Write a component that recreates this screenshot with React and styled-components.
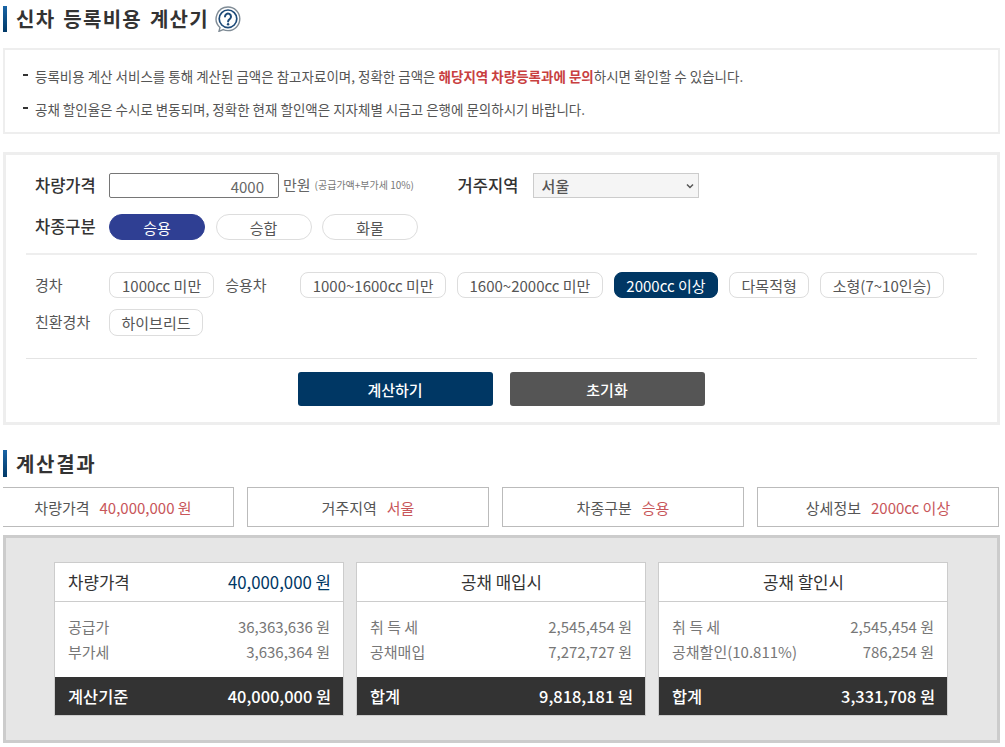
import React from "react";
import styled, { createGlobalStyle } from "styled-components";

const Global = createGlobalStyle`
  html, body { margin: 0; padding: 0; background: #fff; }
  body { font-family: "Noto Sans CJK KR", "Noto Sans", sans-serif; color: #333; }
  * { box-sizing: border-box; }
`;
const Page = styled.div`
  width: 1005px;
  height: 747px;
  padding: 0 5px 0 3px;
  overflow: hidden;
`;
const Heading = styled.h2`
  display: flex;
  align-items: center;
  height: ${(p) => p.$h}px;
  margin: ${(p) => p.$mt}px 0 0;
  padding-left: 9px;
  border-left: 4px solid #0b4f8a;
  border-image: linear-gradient(#1a66a8, #003764) 1;
  font-size: 20px;
  font-weight: 700;
  line-height: 1;
  color: #333;
  letter-spacing: ${(p) => p.$ls}px;
  word-spacing: 2px;
`;
const HelpIcon = styled.svg`
  width: 26px;
  height: 26px;
  margin-left: 6px;
  flex: none;
`;
const Notice = styled.div`
  height: 86px;
  margin-top: 16px;
  padding: 9px 0 0 18px;
  border: 2px solid #eee;
`;
const NoticeLine = styled.p`
  display: flex;
  align-items: center;
  height: 33px;
  margin: 0;
  font-size: 13.5px;
  color: #555;
  &::before {
    content: "";
    width: 5px;
    height: 2px;
    margin-right: 7px;
    background: #333;
    transform: translateY(-1px);
  }
`;
const Strong = styled.b`
  color: #c8403f;
  font-weight: 700;
  white-space: pre;
`;
const Pre = styled.span`
  white-space: pre;
`;
const FormBox = styled.div`
  height: 273px;
  margin-top: 18px;
  padding: 18px 20px 0 20px;
  border: 3px solid #eee;
`;
const Row = styled.div`
  display: flex;
  align-items: center;
  height: ${(p) => p.$h}px;
  margin-top: ${(p) => p.$mt || 0}px;
  padding-left: 9px;
  gap: ${(p) => p.$gap || 0}px;
`;
const FieldLabel = styled.span`
  flex: none;
  width: ${(p) => p.$w}px;
  font-size: 16.5px;
  font-weight: 500;
  color: #333;
  transform: translateY(-1.5px);
`;
const PriceInput = styled.input`
  width: 170px;
  height: 25px;
  padding: 2px 14px 0 0;
  border: 1px solid #767676;
  border-radius: 2px;
  background: #fff;
  font: 400 15px "Noto Sans CJK KR", sans-serif;
  text-align: right;
  color: #666;
  outline: none;
`;
const Unit = styled.span`
  margin-left: 4px;
  font-size: 15px;
  color: #666;
  transform: translateY(-1.5px);
`;
const Note = styled.span`
  width: 143px;
  margin-left: 4px;
  font-size: 10px;
  color: #777;
  transform: translateY(-1px);
`;
const SelectWrap = styled.div`
  position: relative;
  width: 166px;
  height: 25px;
`;
const RegionSelect = styled.select`
  appearance: none;
  width: 100%;
  height: 100%;
  padding-left: 8px;
  border: 1px solid #ccc;
  border-radius: 0;
  background: #f5f5f5;
  font: 500 15px "Noto Sans CJK KR", sans-serif;
  color: #555;
`;
const Chevron = styled.svg`
  position: absolute;
  top: 10px;
  right: 5px;
  width: 8px;
  height: 6px;
  pointer-events: none;
`;
const TypePills = styled.div`
  display: flex;
  gap: 10.5px;
`;
const TypePill = styled.span`
  display: flex;
  align-items: center;
  justify-content: center;
  width: 96px;
  height: 26px;
  border: 1px solid ${(p) => (p.$on ? "#2f3f93" : "#ddd")};
  border-radius: 13px;
  background: ${(p) => (p.$on ? "#2f3f93" : "#fff")};
  font-size: 15px;
  color: ${(p) => (p.$on ? "#fff" : "#555")};
`;
const Divider = styled.hr`
  height: ${(p) => p.$h}px;
  margin: ${(p) => p.$mt}px 0 0;
  border: 0;
  background: ${(p) => p.$c};
`;
const SizeLabel = styled.span`
  flex: none;
  width: ${(p) => p.$w}px;
  font-size: 15px;
  color: #555;
  transform: translateY(-1.5px);
`;
const SizePill = styled.span`
  display: flex;
  align-items: center;
  height: ${(p) => p.$h || 26}px;
  padding: 0 ${(p) => p.$pad || 11.5}px;
  border: 1px solid ${(p) => (p.$on ? "#003764" : "#ddd")};
  border-radius: 8px;
  background: ${(p) => (p.$on ? "#003764" : "#fff")};
  font-size: 15px;
  white-space: nowrap;
  color: ${(p) => (p.$on ? "#fff" : "#555")};
`;
const Actions = styled.div`
  display: flex;
  justify-content: center;
  gap: 17px;
  margin-top: 13px;
  padding-right: 1px;
`;
const ActionButton = styled.button`
  width: 195px;
  height: 34px;
  padding: 0;
  border: 0;
  border-radius: 3px;
  background: ${(p) => p.$bg};
  font: 500 15px "Noto Sans CJK KR", sans-serif;
  color: #fff;
`;
const ChipClip = styled.div`
  margin: 10px -1px 0 0;
  overflow: hidden;
`;
const Chips = styled.div`
  display: grid;
  grid-template-columns: repeat(4, 242px);
  gap: 13px;
  margin-left: -11px;
`;
const Chip = styled.div`
  display: flex;
  align-items: center;
  justify-content: center;
  gap: 10px;
  height: 40px;
  border: 1px solid #bbb;
  font-size: 15px;
  color: #555;
`;
const ChipValue = styled.span`
  color: #c8565a;
`;
const ResultPanel = styled.div`
  display: flex;
  gap: 12px;
  height: 208px;
  margin-top: 8px;
  padding: 24px 0 0 48px;
  border: 3px solid #ccc;
  background: #e6e6e6;
`;
const Card = styled.div`
  display: flex;
  flex-direction: column;
  width: 290px;
  height: 154px;
  border: 1px solid #ccc;
  background: #fff;
`;
const CardHead = styled.div`
  display: flex;
  align-items: center;
  justify-content: ${(p) => (p.$center ? "center" : "space-between")};
  height: 39px;
  flex: none;
  padding: 0 12px 1px 13px;
  border-bottom: 1px solid #ccc;
  font-size: 16.8px;
  color: #333;
`;
const Navy = styled.span`
  color: #003764;
`;
const CardBody = styled.div`
  flex: 1;
  padding: 12px 13px 0 13px;
`;
const BodyRow = styled.div`
  display: flex;
  align-items: center;
  justify-content: space-between;
  height: 25px;
  font-size: 15px;
  color: #777;
`;
const CardFoot = styled.div`
  display: flex;
  align-items: center;
  justify-content: space-between;
  height: 38px;
  flex: none;
  padding: 0 12px 0 13px;
  background: #333;
  font-size: 16.4px;
  font-weight: 500;
  color: #fff;
`;

const sizesFirst = ["1000~1600cc 미만", "1600~2000cc 미만", "2000cc 이상", "다목적형", "소형(7~10인승)"];
const cards = [
  { head: ["차량가격", "40,000,000 원"], rows: [["공급가", "36,363,636 원"], ["부가세", "3,636,364 원"]], foot: ["계산기준", "40,000,000 원"] },
  { title: "공채 매입시", rows: [["취 득 세", "2,545,454 원"], ["공채매입", "7,272,727 원"]], foot: ["합계", "9,818,181 원"] },
  { title: "공채 할인시", rows: [["취 득 세", "2,545,454 원"], ["공채할인(10.811%)", "786,254 원"]], foot: ["합계", "3,331,708 원"] },
];
const chips = [["차량가격", "40,000,000 원"], ["거주지역", "서울"], ["차종구분", "승용"], ["상세정보", "2000cc 이상"]];

export default function App() {
  return (
    <Page>
      <Global />
      <Heading $h={26} $mt={6} $ls={1.3}>
        신차 등록비용 계산기
        <HelpIcon viewBox="0 0 26 26" fill="none">
          <path d="M13 1a11.8 11.8 0 0 1 0 23.6c-1.7 0-3.3-.3-4.7-1l-4.3 1.7 1-3.8A11.8 11.8 0 0 1 13 1z" stroke="#7f8b95" strokeWidth="1.4" />
          <circle cx="13" cy="12.8" r="8.8" stroke="#1d4a78" strokeWidth="1.7" />
          <path d="M10 10.6a3 3 0 1 1 4.8 2.4c-1.1.8-1.7 1.4-1.7 2.6" stroke="#1d4a78" strokeWidth="2" strokeLinecap="round" />
          <circle cx="13.1" cy="18.2" r="1.2" fill="#1d4a78" />
        </HelpIcon>
      </Heading>
      <Notice>
        <NoticeLine>
          <Pre>등록비용 계산 서비스를 통해 계산된 금액은 참고자료이며, 정확한 금액은 </Pre>
          <Strong>해당지역 차량등록과에 문의</Strong>
          <Pre>하시면 확인할 수 있습니다.</Pre>
        </NoticeLine>
        <NoticeLine>공채 할인율은 수시로 변동되며, 정확한 현재 할인액은 지자체별 시금고 은행에 문의하시기 바랍니다.</NoticeLine>
      </Notice>
      <FormBox>
        <Row $h={25}>
          <FieldLabel $w={74}>차량가격</FieldLabel>
          <PriceInput readOnly value="4000" />
          <Unit>만원</Unit>
          <Note>(공급가액+부가세 10%)</Note>
          <FieldLabel $w={75}>거주지역</FieldLabel>
          <SelectWrap>
            <RegionSelect defaultValue="서울">
              <option>서울</option>
            </RegionSelect>
            <Chevron viewBox="0 0 8 6" fill="none">
              <path d="M1 1.5l3 3 3-3" stroke="#555" strokeWidth="1.5" />
            </Chevron>
          </SelectWrap>
        </Row>
        <Row $h={26} $mt={16}>
          <FieldLabel $w={74}>차종구분</FieldLabel>
          <TypePills>
            <TypePill $on>승용</TypePill>
            <TypePill>승합</TypePill>
            <TypePill>화물</TypePill>
          </TypePills>
        </Row>
        <Divider $h={2} $mt={13} $c="#eee" />
        <Row $h={26} $mt={17} $gap={11}>
          <SizeLabel $w={63}>경차</SizeLabel>
          <SizePill $pad={12}>1000cc 미만</SizePill>
          <SizeLabel $w={64}>승용차</SizeLabel>
          {sizesFirst.map((s) => (
            <SizePill key={s} $on={s === "2000cc 이상"}>{s}</SizePill>
          ))}
        </Row>
        <Row $h={27} $mt={11} $gap={11}>
          <SizeLabel $w={63}>친환경차</SizeLabel>
          <SizePill $h={27}>하이브리드</SizePill>
        </Row>
        <Divider $h={1} $mt={22} $c="#e4e4e4" />
        <Actions>
          <ActionButton $bg="#003764">계산하기</ActionButton>
          <ActionButton $bg="#555">초기화</ActionButton>
        </Actions>
      </FormBox>
      <Heading $h={27} $mt={25} $ls={1.7}>계산결과</Heading>
      <ChipClip>
        <Chips>
          {chips.map(([k, v]) => (
            <Chip key={k}>
              {k}
              <ChipValue>{v}</ChipValue>
            </Chip>
          ))}
        </Chips>
      </ChipClip>
      <ResultPanel>
        {cards.map((c) => (
          <Card key={c.foot[1]}>
            {c.title ? (
              <CardHead $center>{c.title}</CardHead>
            ) : (
              <CardHead>
                {c.head[0]}
                <Navy>{c.head[1]}</Navy>
              </CardHead>
            )}
            <CardBody>
              {c.rows.map(([k, v]) => (
                <BodyRow key={k}>
                  <span>{k}</span>
                  <span>{v}</span>
                </BodyRow>
              ))}
            </CardBody>
            <CardFoot>
              <span>{c.foot[0]}</span>
              <span>{c.foot[1]}</span>
            </CardFoot>
          </Card>
        ))}
      </ResultPanel>
    </Page>
  );
}
